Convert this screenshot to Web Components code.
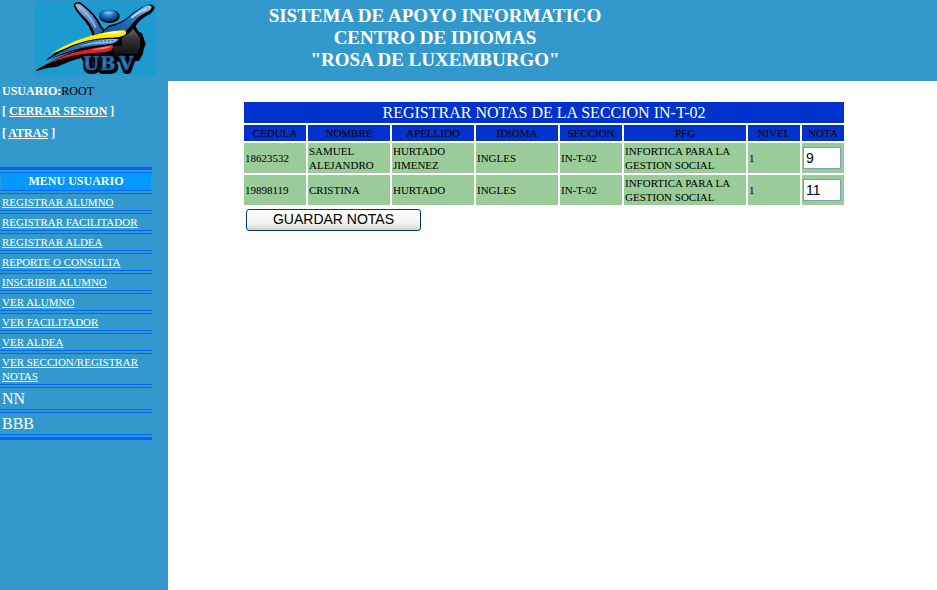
<!DOCTYPE html>
<html lang="es">
<head>
<meta charset="utf-8">
<title>Registrar notas</title>
<style>
  body { margin: 0; background: #fff; font-family: "Liberation Serif", "Times New Roman", serif; }
</style>
</head>
<body>
<notas-app></notas-app>

<template id="t-app">
  <style>
    :host { display: grid; grid-template-columns: 168px 1fr; grid-template-rows: auto 1fr; min-height: 100vh; }
    app-header { grid-column: 1 / -1; }
    main { padding: 19px 17px 16px 0; display: flex; justify-content: center; align-items: flex-start; }
  </style>
  <app-header>
    <span>SISTEMA DE APOYO INFORMATICO</span>
    <span>CENTRO DE IDIOMAS</span>
    <span>"ROSA DE LUXEMBURGO"</span>
  </app-header>
  <side-bar>
    <user-panel>ROOT</user-panel>
    <user-menu>
      <menu-row heading>MENU USUARIO</menu-row>
      <menu-row href="#alumno">REGISTRAR ALUMNO</menu-row>
      <menu-row href="#facilitador">REGISTRAR FACILITADOR</menu-row>
      <menu-row href="#aldea">REGISTRAR ALDEA</menu-row>
      <menu-row href="#reporte">REPORTE O CONSULTA</menu-row>
      <menu-row href="#inscribir">INSCRIBIR ALUMNO</menu-row>
      <menu-row href="#ver-alumno">VER ALUMNO</menu-row>
      <menu-row href="#ver-facilitador">VER FACILITADOR</menu-row>
      <menu-row href="#ver-aldea">VER ALDEA</menu-row>
      <menu-row href="#ver-seccion">VER SECCION/REGISTRAR NOTAS</menu-row>
      <menu-row>NN</menu-row>
      <menu-row>BBB</menu-row>
    </user-menu>
  </side-bar>
  <main><grades-form></grades-form></main>
</template>

<template id="t-header">
  <style>
    :host { display: grid; grid-template-columns: 168px 534fr 235fr; background: #3399cc; min-height: 81px; }
    ubv-logo { margin: 1px 0 0 35px; }
    h1 { margin: 0; padding-top: 5px; font-size: 19px; line-height: 22px; font-weight: bold; color: #fff; text-align: center; }
    ::slotted(span) { display: block; }
  </style>
  <ubv-logo></ubv-logo>
  <h1><slot></slot></h1>
</template>

<template id="t-logo">
  <style>:host { display: block; width: 121px; height: 74px; } svg { display: block; width: 100%; height: 100%; }</style>
  <svg viewBox="15 3 363 222" role="img" aria-label="UBV">
    <defs>
      <linearGradient id="arm" x1="0" y1="0" x2="1" y2="1"><stop offset="0" stop-color="#8fb4e0"/><stop offset=".4" stop-color="#5f8fc8"/><stop offset="1" stop-color="#0b4a94"/></linearGradient>
      <linearGradient id="arm2" x1="1" y1="0" x2="0" y2="1"><stop offset="0" stop-color="#a8d0f0"/><stop offset=".35" stop-color="#2b7bc4"/><stop offset="1" stop-color="#0a4c94"/></linearGradient>
      <radialGradient id="ball" cx=".5" cy=".3" r=".65"><stop offset="0" stop-color="#5db0ec"/><stop offset=".6" stop-color="#1668ae"/><stop offset="1" stop-color="#08386e"/></radialGradient>
      <linearGradient id="rock" x1="0" y1="0" x2="0" y2="1"><stop offset="0" stop-color="#827e82"/><stop offset=".4" stop-color="#383638"/><stop offset="1" stop-color="#0c0c0e"/></linearGradient>
      <linearGradient id="letters" x1="0" y1="0" x2="0" y2="1"><stop offset="0" stop-color="#12569e"/><stop offset=".5" stop-color="#2d86cc"/><stop offset="1" stop-color="#0c3b78"/></linearGradient>
    </defs>
    <path fill="#1b9bcf" d="M15 3h363v222H15z"/>
    <path d="M266 84l28-17 20 8 13 21 9 3 7 22 5 10-7 16-2 14-12 22-80 2-10-50z"/>
    <path fill="url(#rock)" d="M266 90q17-19 39-12l11 18 14 16 1 30-12 22-66 5-3-35q24-18 16-44z"/>
    <path stroke="#000" stroke-width="12" stroke-linejoin="round" d="M137 16q7-8 17 1 42 32 56 66l18 20-34 6q-7-34-38-64-13-13-19-29z"/>
    <path fill="url(#arm)" d="M135 15q7-9 19 0 42 32 55 66l24 24-38 2q-7-34-38-62-15-14-22-30z"/>
    <path fill="none" stroke="#a8c1e8" stroke-width="6" opacity=".7" d="M145 17q40 34 52 66"/>
    <path stroke="#000" stroke-width="13" stroke-linejoin="round" d="M214 106l26-24q39-8 61-28 26-22 50-32 12-5 16 1 0 5-13 15-27 13-43 37-17 25-44 32z"/>
    <path fill="url(#arm2)" d="M208 106l28-24q39-8 61-30 26-22 49-34 14-6 19 3 0 8-16 16-27 13-45 38-19 25-44 31z"/>
    <path fill="none" stroke="#b7d8f2" stroke-width="6" d="M304 53q22-18 46-27"/>
    <ellipse cx="238" cy="49" rx="31" ry="20"/>
    <ellipse cx="235" cy="46" rx="28" ry="18" fill="url(#ball)"/>
    <path fill="#78c2f2" opacity=".75" d="M219 40q17-11 33-1-13 6-33 1z"/>
    <path d="M158 168l18-14 68-16 12 24-16 16h-80z"/>
    <path fill="#0b4888" d="M166 160l70-17-4 20q-30 12-58 4z"/>
    <path d="M48 180q60-52 180-76l46-6 2 40q-110-2-196 32z"/>
    <path fill="#2d70b2" d="M56 178q70-48 148-60 34-8 66-8-2 20-39 24-90 4-156 36z"/>
    <path fill="#8dbbe4" d="M146 139q66-24 117-23-7 14-34 14-44 2-83 9z"/>
    <path fill="none" stroke="#2b77b5" stroke-width="4" stroke-dasharray="6 5" d="M136 138q54-16 116-16"/>
    <path d="M64 163q86-40 180-54h40l-14 8q-100-6-170 36z"/>
    <path fill="#fff000" d="M62 162q73-47 153-62 39-9 70-9 7 8-1 14-19 10-52 8-72 4-130 34-15 6-40 15z"/>
    <path fill="#fffbb0" d="M207 102q43-10 74-9-20 11-74 9z"/>
    <path d="M18 214q3-8 22-16 70-44 146-57l60-9 6 10-4 20q-90 0-166 38-40 4-64 14z"/>
    <path fill="#eb1d24" d="M40 198q66-40 140-51 39-8 66-13 8 6-2 16-14 8-45 8-81 3-151 36z"/>
    <path fill="#ee7880" d="M180 149q40-8 63-12-4 12-63 12z"/>
    <g font-family="DejaVu Serif, serif" font-size="54" font-weight="bold" stroke-linejoin="round">
      <text x="162 213 270" y="212" stroke="#000" stroke-width="18">UBV</text>
      <text x="160 211 268" y="211" fill="url(#letters)" stroke="#1b66ac" stroke-width="2">UBV</text>
    </g>
  </svg>
</template>

<template id="t-side">
  <style>:host { display: flex; flex-direction: column; align-items: flex-start; gap: 23px; background: #3399cc; }</style>
  <slot></slot>
</template>

<template id="t-user">
  <style>
    :host { display: block; padding: 1px 2px 0; color: #000; font-size: 12px; line-height: 18px; }
    b, a { color: #fff; }
    p { margin: 0; font-size: 12px; line-height: 22px; color: #fff; font-weight: bold; }
  </style>
  <div><b>USUARIO:</b><slot></slot></div>
  <p>[ <a href="#salir">CERRAR SESION</a> ]</p>
  <p>[ <a href="#atras">ATRAS</a> ]</p>
</template>

<template id="t-menu">
  <style>
    :host { display: block; width: 152px; }
    nav { display: flex; flex-direction: column; gap: 2px; padding: 2px 0; border: solid #0066ff; border-width: 3px 0; }
  </style>
  <nav><slot></slot></nav>
</template>

<template id="t-row">
  <style>
    :host { display: block; border: solid #0066ff; border-width: 1px 0; padding: 1px 2px; color: #fff; font-size: 16px; line-height: 19px; }
    :host([href]) { font-size: 11px; line-height: 14px; }
    :host([heading]) { font-size: 12px; line-height: 17px; font-weight: bold; text-align: center; padding: 0 1px; }
    :host([heading]) .label { background: #0099ff; }
    a { color: #fff; }
  </style>
  <div class="label"><slot></slot></div>
</template>

<template id="t-grades">
  <style>
    :host { display: block; flex: 0 1 604px; }
    form { margin: 0; }
    table { width: 100%; border-spacing: 2px; table-layout: fixed; font-size: 11px; line-height: 14px; color: #000; }
    th { background: #0033cc; font-weight: normal; padding: 1px; }
    .title { font-size: 16px; line-height: 19px; color: #fff; }
    td { background: #99cc99; padding: 1px; vertical-align: middle; }
    input { display: block; box-sizing: border-box; width: 38px; height: 22px; border: 1px solid #7f9db9; padding: 1px 2px; background: #fff; font: 14px "Liberation Sans", Arial, sans-serif; color: #000; }
    button { display: block; width: 175px; height: 22px; margin: 2px 0 0 4px; padding: 0 0 2px; border: 1px solid #003c74; border-radius: 3px; background: linear-gradient(#fff, #f3f2ed 70%, #d8d2c6); font: 14px "Liberation Sans", Arial, sans-serif; color: #000; }
  </style>
  <form>
    <table>
      <colgroup><col style="width:62px"><col style="width:82px"><col style="width:82px"><col style="width:82px"><col style="width:62px"><col style="width:122px"><col style="width:52px"><col style="width:42px"></colgroup>
      <thead>
        <tr><th class="title" colspan="8">REGISTRAR NOTAS DE LA SECCION IN-T-02</th></tr>
        <tr><th>CEDULA</th><th>NOMBRE</th><th>APELLIDO</th><th>IDIOMA</th><th>SECCION</th><th>PFG</th><th>NIVEL</th><th id="nota">NOTA</th></tr>
      </thead>
      <tbody>
        <tr><td>18623532</td><td>SAMUEL ALEJANDRO</td><td>HURTADO JIMENEZ</td><td>INGLES</td><td>IN-T-02</td><td>INFORTICA PARA LA GESTION SOCIAL</td><td>1</td><td><input aria-labelledby="nota" name="n1" value="9"></td></tr>
        <tr><td>19898119</td><td>CRISTINA</td><td>HURTADO</td><td>INGLES</td><td>IN-T-02</td><td>INFORTICA PARA LA GESTION SOCIAL</td><td>1</td><td><input aria-labelledby="nota" name="n2" value="11"></td></tr>
      </tbody>
    </table>
    <button type="button">GUARDAR NOTAS</button>
  </form>
</template>

<script>
  class Base extends HTMLElement {
    constructor() {
      super();
      this.attachShadow({ mode: "open" })
        .append(document.getElementById(this.constructor.tpl).content.cloneNode(true));
    }
  }
  class AppHeader extends Base { static tpl = "t-header"; }
  class UbvLogo extends Base { static tpl = "t-logo"; }
  class SideBar extends Base { static tpl = "t-side"; }
  class UserPanel extends Base { static tpl = "t-user"; }
  class UserMenu extends Base { static tpl = "t-menu"; }
  class MenuRow extends Base {
    static tpl = "t-row";
    connectedCallback() {
      const href = this.getAttribute("href");
      if (!href || this.shadowRoot.querySelector("a")) return;
      const link = document.createElement("a");
      const slot = this.shadowRoot.querySelector("slot");
      link.href = href;
      slot.replaceWith(link);
      link.append(slot);
    }
  }
  class GradesForm extends Base { static tpl = "t-grades"; }
  class NotasApp extends Base { static tpl = "t-app"; }
  customElements.define("ubv-logo", UbvLogo);
  customElements.define("app-header", AppHeader);
  customElements.define("side-bar", SideBar);
  customElements.define("user-panel", UserPanel);
  customElements.define("user-menu", UserMenu);
  customElements.define("menu-row", MenuRow);
  customElements.define("grades-form", GradesForm);
  customElements.define("notas-app", NotasApp);
</script>
</body>
</html>
